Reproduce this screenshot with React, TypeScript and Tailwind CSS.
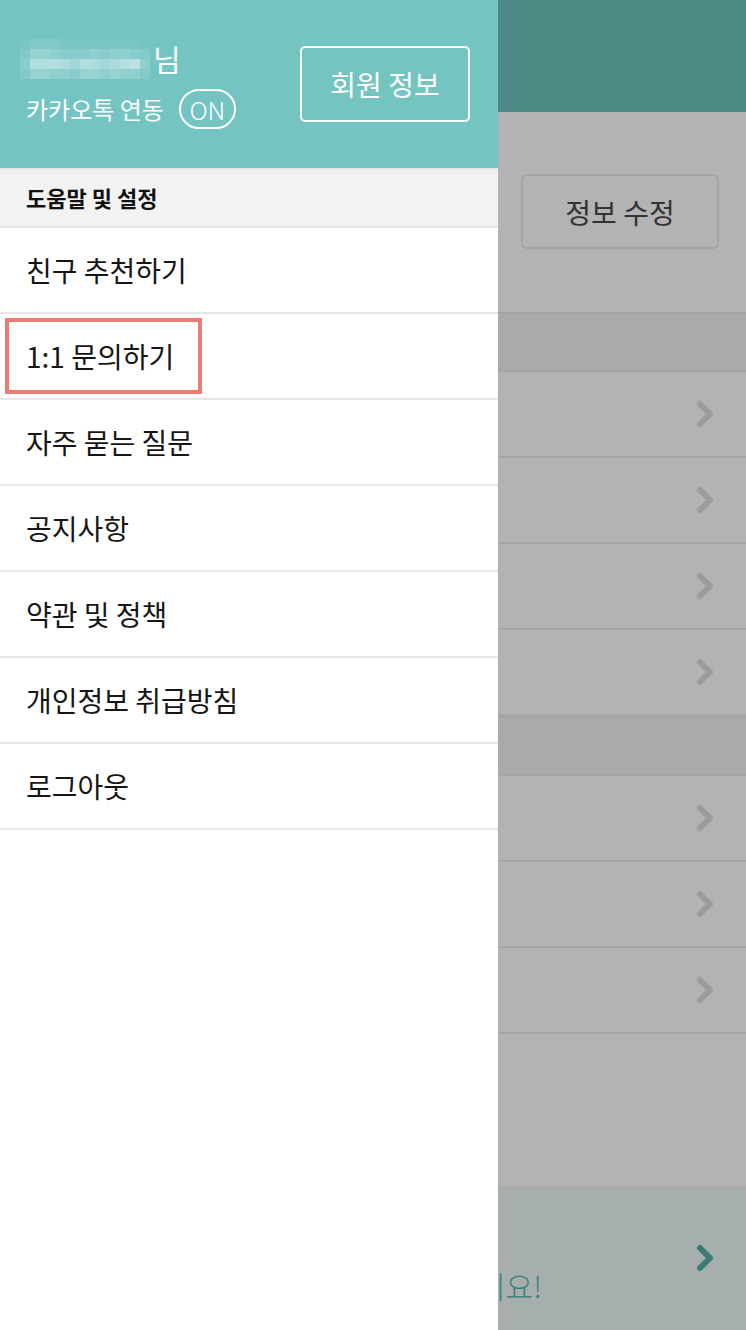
import React from "react";

const font = { fontFamily: '"Noto Sans CJK KR", "Noto Sans", sans-serif' };

const mosaic: string[][] = [
  ["bg-white/5", "bg-white/10", "bg-white/10", "bg-white/10", "bg-white/5", "bg-white/5", "bg-white/5", "bg-white/5", "bg-white/5", "bg-white/5", "bg-white/5", "bg-white/5", "bg-white/0"],
  ["bg-white/10", "bg-white/25", "bg-white/25", "bg-white/20", "bg-white/15", "bg-white/15", "bg-white/15", "bg-white/20", "bg-white/15", "bg-white/20", "bg-white/20", "bg-white/15", "bg-white/10"],
  ["bg-white/15", "bg-white/45", "bg-white/45", "bg-white/45", "bg-white/40", "bg-white/30", "bg-white/45", "bg-white/40", "bg-white/35", "bg-white/40", "bg-white/45", "bg-white/50", "bg-white/20"],
  ["bg-white/10", "bg-white/25", "bg-white/25", "bg-white/20", "bg-white/20", "bg-white/15", "bg-white/25", "bg-white/25", "bg-white/20", "bg-white/25", "bg-white/20", "bg-white/20", "bg-white/10"],
];

const menu = [
  "친구 추천하기",
  "1:1 문의하기",
  "자주 묻는 질문",
  "공지사항",
  "약관 및 정책",
  "개인정보 취급방침",
  "로그아웃",
];

function Chevron({ color }: { color: string }) {
  return (
    <svg width="20" height="30" viewBox="0 0 20 30" className="shrink-0">
      <polyline
        points="5,5 15,15 5,25"
        fill="none"
        stroke={color}
        strokeWidth="6"
        strokeLinecap="round"
        strokeLinejoin="round"
      />
    </svg>
  );
}

function BgRow() {
  return (
    <div className="h-[86px] shrink-0 border-b-2 border-[#a6a6a6] flex items-center justify-end pr-[31px]">
      <Chevron color="#9c9c9c" />
    </div>
  );
}

export default function App() {
  return (
    <div className="flex w-[746px] h-[1330px] overflow-hidden bg-white" style={font}>
      {/* Drawer */}
      <div className="w-[498px] shrink-0 flex flex-col bg-white">
        <div className="h-[168px] bg-[#74c4c2] flex items-center justify-between pl-[20px] pr-[28px]">
          <div className="flex flex-col">
            <div className="flex items-center h-[40px]">
              <div className="flex flex-col">
                {mosaic.map((row, i) => (
                  <div key={i} className="flex">
                    {row.map((c, j) => (
                      <div key={j} className={`w-[10px] h-[10px] ${c}`} />
                    ))}
                  </div>
                ))}
              </div>
              <span className="text-white text-[30px] leading-none ml-[3px] -mt-[2px]">님</span>
            </div>
            <div className="flex items-center mt-[10px] h-[40px]">
              <span className="text-white text-[24px] leading-none ml-[6px]">카카오톡 연동</span>
              <span className="ml-[15px] h-[40px] w-[57px] rounded-full border-2 border-white text-white text-[25px] font-light leading-none flex items-center justify-center">
                ON
              </span>
            </div>
          </div>
          <div className="w-[170px] h-[76px] border-2 border-white rounded-[5px] flex items-center justify-center text-white text-[28px] leading-none">
            회원 정보
          </div>
        </div>
        <div className="h-[60px] bg-[#f2f2f2] border-t-2 border-b-2 border-[#e6e6e6] flex items-center px-[26px]">
          <span className="text-[22px] font-bold text-[#111] leading-none -mt-[2px]">도움말 및 설정</span>
        </div>
        {menu.map((m, i) => (
          <div
            key={m}
            className="relative h-[86px] border-b-2 border-[#e6e6e6] flex items-center px-[26px]"
          >
            <span className="text-[28px] text-[#151515] leading-none">{m}</span>
            {i === 1 && (
              <div className="absolute left-[5px] top-[4px] w-[197px] h-[76px] border-4 border-[#ec7b74]" />
            )}
          </div>
        ))}
      </div>

      {/* Dimmed background page */}
      <div className="flex-1 flex flex-col overflow-hidden bg-[#b3b3b3]">
        <div className="h-[112px] shrink-0 bg-[#4e8a85]" />
        <div className="h-[200px] shrink-0 flex items-center pl-[23px]">
          <div className="w-[198px] h-[75px] border-2 border-[#a3a3a3] rounded-[6px] flex items-center justify-center text-[28px] text-[#333] leading-none -mt-[1px]">
            정보 수정
          </div>
        </div>
        <div className="h-[60px] shrink-0 bg-[#aaaaaa] border-t-2 border-b-2 border-[#a5a5a5]" />
        <BgRow />
        <BgRow />
        <BgRow />
        <BgRow />
        <div className="h-[60px] shrink-0 bg-[#aaaaaa] border-t-2 border-b-2 border-[#a5a5a5]" />
        <BgRow />
        <BgRow />
        <BgRow />
        <div className="h-[152px] shrink-0" />
        <div className="flex-1 bg-[#a7aeae] relative overflow-hidden">
          <div className="absolute right-[31px] top-[57px]">
            <Chevron color="#3a7b78" />
          </div>
          <span className="absolute left-[-20px] top-[84px] text-[30px] font-light leading-none text-[#3e807c] whitespace-nowrap">
            이요!
          </span>
        </div>
      </div>
    </div>
  );
}
